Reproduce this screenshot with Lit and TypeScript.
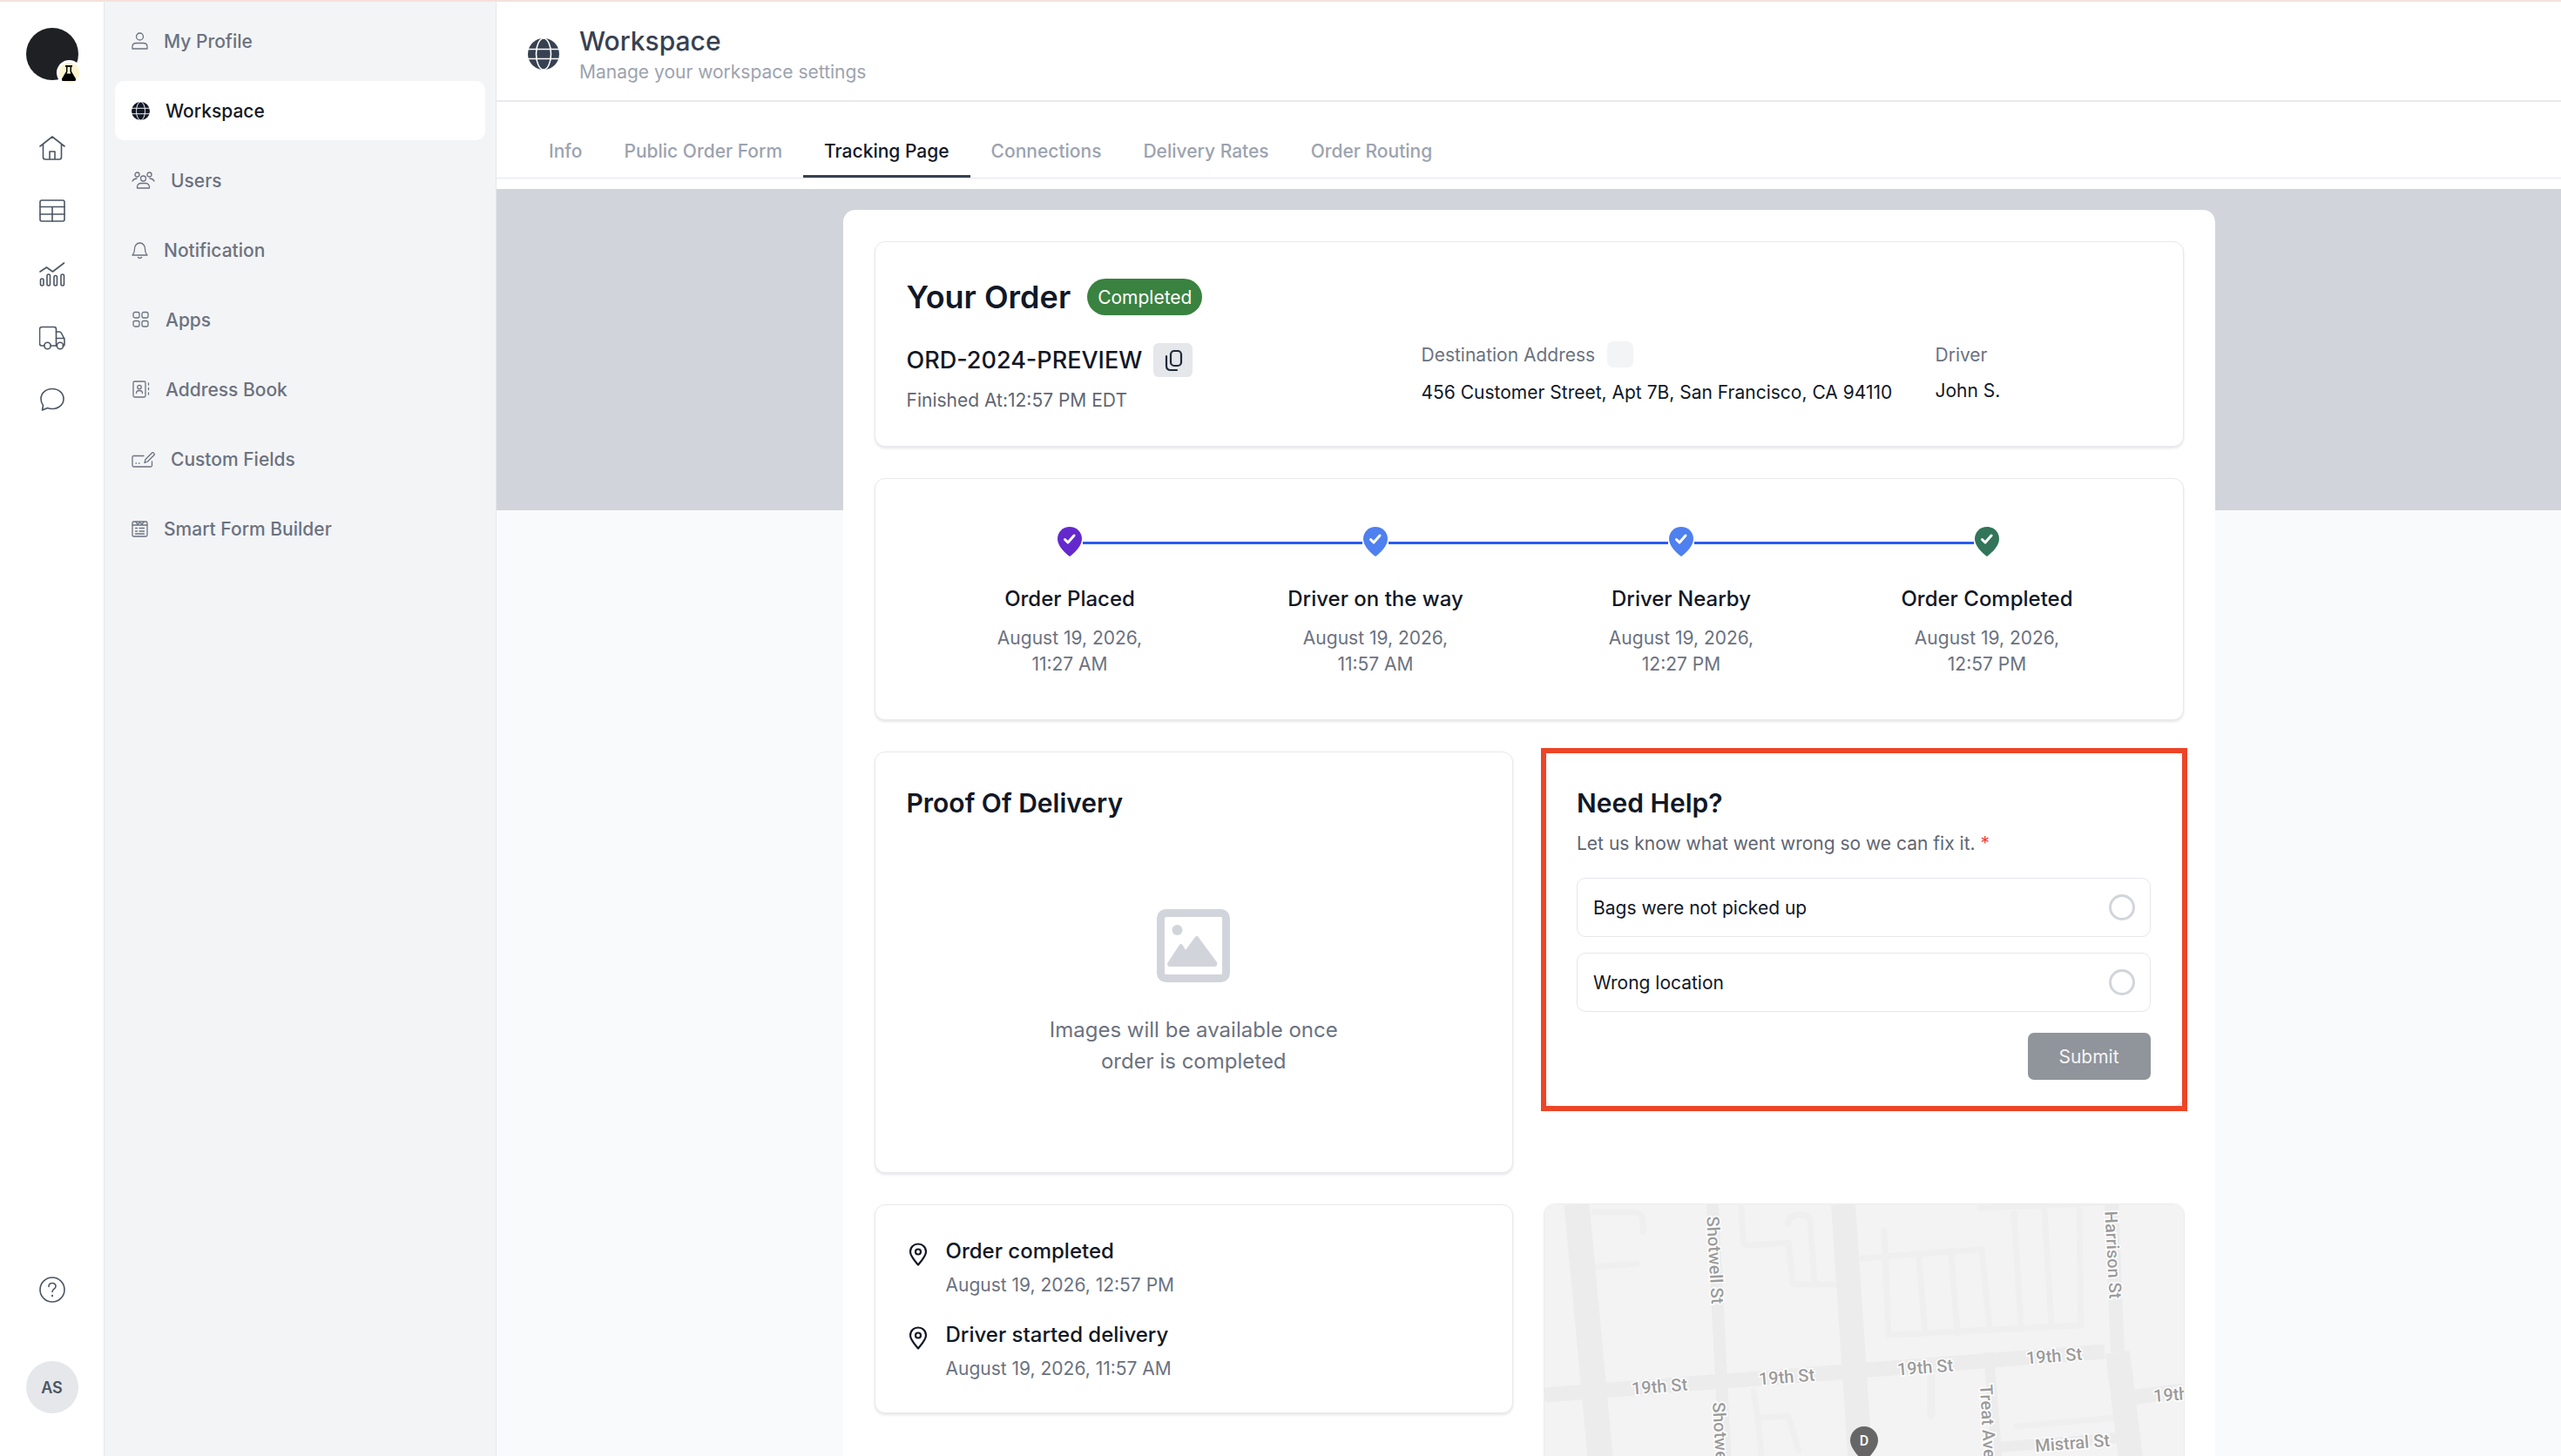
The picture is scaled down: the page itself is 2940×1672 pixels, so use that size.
import { LitElement, css, html, svg } from 'lit';
import { customElement } from 'lit/decorators.js';

const line = (w: number, h: number, body: unknown) => html`<svg
  class="line-icon"
  width=${w}
  height=${h}
  viewBox="0 0 ${w} ${h}"
  fill="none"
  stroke="currentColor"
  stroke-width="1.3"
  stroke-linecap="round"
  stroke-linejoin="round"
>${body}</svg>`;

const globe = (size: number) => html`<svg width=${size} height=${size} viewBox="0 0 36 36">
  <circle cx="18" cy="18" r="18" fill="currentColor"></circle>
  <g fill="none" stroke="#fff" stroke-width="1.6">
    <ellipse cx="18" cy="18" rx="8.5" ry="18"></ellipse>
    <path d="M0 12.5h36M0 23.5h36"></path>
  </g>
</svg>`;

const NAV = [
  {
    label: 'My Profile',
    icon: line(19, 20, svg`<circle cx="9.5" cy="5" r="4"/><path d="M1 19v-2.5C1 14 3 12.5 5.5 12.5h8c2.500 0 4.500 1.500 4.500 4V19z"/>`),
  },
  { label: 'Workspace', active: true, icon: globe(21) },
  {
    label: 'Users',
    icon: line(27, 20, svg`<circle cx="6.500" cy="3.500" r="2.500"/><circle cx="20.500" cy="3.500" r="2.500"/><circle cx="13.500" cy="8" r="3"/><path d="M1 11c1-2 3-3 5-3M26 11c-1-2-3-3-5-3M6.500 19v-1.500c0-2 2-4 4-4h6c2 0 4 2 4 4V19z"/>`),
  },
  {
    label: 'Notification',
    icon: line(19, 20, svg`<path d="M1 16c2-2 2.500-3 2.500-7 0-4 2.500-7 6-7s6 3 6 7c0 4 .5 5 2.500 7z"/><path d="M7.500 18.500c1 1.200 3 1.200 4 0"/>`),
  },
  {
    label: 'Apps',
    icon: line(21, 20, svg`<rect x="2" y="1.500" width="7" height="6.500" rx="2"/><rect x="12" y="1.500" width="7" height="6.500" rx="2"/><rect x="2" y="11.500" width="7" height="6.500" rx="2"/><rect x="12" y="11.500" width="7" height="6.500" rx="2"/>`),
  },
  {
    label: 'Address Book',
    icon: line(21, 20, svg`<rect x="2" y="1" width="14" height="18" rx="1.500"/><circle cx="9" cy="7.500" r="2.200"/><path d="M5.500 14.500c0-2 1.500-3 3.500-3s3.500 1 3.500 3M19.500 3v2M19.500 8.500v2M19.500 14v2"/>`),
  },
  {
    label: 'Custom Fields',
    icon: line(27, 20, svg`<path d="M14 6.500H2.500c-1 0-1.500.5-1.500 1.500v9.500c0 1 .5 1.500 1.500 1.500H22c1 0 1.500-.5 1.500-1.500V13"/><path d="M5 15h.5M8.500 15H9M15 14.500l1-4L23.500 3c1-1 3.500 1 2.500 2.500L18.500 13z"/>`),
  },
  {
    label: 'Smart Form Builder',
    icon: line(19, 20, svg`<rect x="1" y="2" width="17" height="17" rx="1.500"/><path d="M1 6h17M5 2.500l2 2.500 2.500-2 2.500 2 2-2.500M4.500 9.500h2M9 9.500h5.500M4.500 13h2M9 13h5.500M4.500 16h10"/>`),
  },
];

const RAIL = [
  svg`<path d="M1 13 15 2l14 11M4.500 11v14.500c0 1.500 1 2.500 2.500 2.500h16c1.500 0 2.500-1 2.500-2.500V11M12 28v-9h6v9"/>`,
  svg`<rect x="1" y="3" width="28" height="24" rx="2"/><path d="M1 10.500h28M1 19h28M15 10.500V27"/>`,
  svg`<path d="M1 12l7.500-5 7 5L28.500 2"/><rect x="1.500" y="20" width="3.500" height="8" rx="1.700"/><rect x="9" y="15" width="3.500" height="13" rx="1.700"/><rect x="17" y="16.500" width="3.500" height="11.500" rx="1.700"/><rect x="25" y="15" width="3.500" height="13" rx="1.700"/>`,
  svg`<path d="M6 25H3c-1.500 0-2.500-1-2.500-2.500V6C.5 4.500 1.500 3.500 3 3.500h14c1.500 0 2.500 1 2.500 2.500v19H13"/><path d="M19.500 9h3.500c1 0 2 .5 2.500 1.500l3 6c.3.700.5 1.300.5 2V24c0 .7-.5 1-1 1h-1M19.500 16.500h9.500M19.500 25h1"/><circle cx="9.500" cy="25" r="3.700"/><circle cx="24" cy="25" r="3.700"/>`,
  svg`<path d="M15 2.500c7.500 0 13 5 13 11.500s-5.500 11.500-13 11.500c-2 0-4-.5-5.500-1L3.500 27l1-5.500C3 19.500 2 17 2 14 2 7.500 7.500 2.500 15 2.500z"/>`,
];

const STEPS = [
  { title: 'Order Placed', day: 'August 19, 2026,', time: '11:27 AM', color: '#6429cd' },
  { title: 'Driver on the way', day: 'August 19, 2026,', time: '11:57 AM', color: '#4f80ef' },
  { title: 'Driver Nearby', day: 'August 19, 2026,', time: '12:27 PM', color: '#4f80ef' },
  { title: 'Order Completed', day: 'August 19, 2026,', time: '12:57 PM', color: '#32755a' },
];

const TABS = ['Info', 'Public Order Form', 'Tracking Page', 'Connections', 'Delivery Rates', 'Order Routing'];

const ACTIVITY = [
  { title: 'Order completed', date: 'August 19, 2026, 12:57 PM' },
  { title: 'Driver started delivery', date: 'August 19, 2026, 11:57 AM' },
];

const pin = (color: string) => html`<svg class="pin" width="28" height="34" viewBox="0 0 28 34">
  <path fill=${color} d="M14 0C6 0 0 6 0 14c0 8 9 16.500 14 20 5-3.500 14-12 14-20C28 6 22 0 14 0z"></path>
  <path fill="none" stroke="#fff" stroke-width="3" stroke-linecap="round" stroke-linejoin="round" d="M8.500 14.500l3.500 3.500 7-8"></path>
</svg>`;

const mapView = html`<svg class="map-svg" width="734" height="300" viewBox="0 0 734 300">
  <rect width="734" height="300" fill="#f3f3f3"></rect>
  <g fill="none" stroke="#efefef" stroke-width="7" stroke-linecap="round" stroke-linejoin="round">
    <path d="M57 9h45c8 0 11 4 11 12v10M59 72l47-4"></path>
    <path d="M226 4l2 36c0 5 3 7 8 7l44-3 5 46c0 2 2 2 5 2h45M305 20c0-5-4-8-12-8-8 0-13 3-13 10M305 20l5 67"></path>
    <path d="M365 62l132-10M500 4l144-6M390 30l5 120 221-11"></path>
    <path d="M430 62l7 86M467 60l7 88M502 52l9 90M539 10l8 130M574 8l8 130M614 6l2 133"></path>
    <path d="M240 214l5 31 35-2 12 40M245 245l5 55M542 255l114-10"></path>
    <path d="M444 197v45" stroke-width="9"></path>
  </g>
  <g fill="none" stroke="#ececec" stroke-linecap="butt">
    <path d="M37 0l28 300" stroke-width="29"></path>
    <path d="M343 0l20 300" stroke-width="28"></path>
    <path d="M193 0l15 300" stroke-width="14"></path>
    <path d="M651 0l7 170" stroke-width="16"></path>
    <path d="M658 170l16 130" stroke-width="28"></path>
    <path d="M510 170l10 130" stroke-width="12"></path>
    <path d="M0 219l643-50" stroke-width="17"></path>
    <path d="M672 222l62-8" stroke-width="17"></path>
    <path d="M520 279l140-11" stroke-width="12"></path>
  </g>
  <g class="map-label">
    <text x="132" y="209" text-anchor="middle" transform="rotate(-4.500 132 209)" dy="7">19th St</text>
    <text x="278" y="198" text-anchor="middle" transform="rotate(-4.500 278 198)" dy="7">19th St</text>
    <text x="437" y="187" text-anchor="middle" transform="rotate(-4.500 437 187)" dy="7">19th St</text>
    <text x="585" y="174" text-anchor="middle" transform="rotate(-4.500 585 174)" dy="7">19th St</text>
    <text x="699" y="220" transform="rotate(-4.500 699 220)" dy="7">19th St</text>
    <text x="196" y="64" text-anchor="middle" transform="rotate(86.800 196 64)" dy="7">Shotwell St</text>
    <text x="653" y="58" text-anchor="middle" transform="rotate(87 653 58)" dy="7">Harrison St</text>
    <text x="200" y="227" transform="rotate(86.800 200 227)" dy="7">Shotwell St</text>
    <text x="507" y="207" transform="rotate(87 507 207)" dy="7">Treat Ave</text>
    <text x="606" y="274" text-anchor="middle" transform="rotate(-4.500 606 274)" dy="7">Mistral St</text>
  </g>
  <path fill="#666666" d="M367 255c-9 0-16 7-16 16 0 9 10 19 16 25 6-6 16-16 16-25 0-9-7-16-16-16z"></path>
  <path fill="#2f8f5b" d="M364 298h6l-3 2z"></path>
  <text x="367" y="277" text-anchor="middle" class="map-pin-label">D</text>
</svg>`;

@customElement('app-root')
export class AppRoot extends LitElement {
  static styles = css`
    :host {
      display: block;
      width: 2940px;
      height: 1672px;
      overflow: hidden;
      box-sizing: border-box;
      border-top: 2px solid #f5e1dc;
      background: #fff;
      color: #111827;
      font-family: Inter, 'Liberation Sans', sans-serif;
    }

    * {
      box-sizing: border-box;
    }

    .shell {
      display: flex;
      height: 1670px;
    }

    .rail {
      width: 120px;
      flex: none;
      border-right: 1px solid #e5e7eb;
      display: flex;
      flex-direction: column;
      align-items: center;
      padding: 30px 0 49px;
      color: #4b5563;
    }

    .logo {
      position: relative;
      width: 60px;
      height: 60px;
      border-radius: 50%;
      background: #1f2023;
      margin-bottom: 63px;
    }

    .logo-badge {
      position: absolute;
      right: -3px;
      bottom: -5px;
      width: 27px;
      height: 27px;
      border: 2px solid #fff;
      border-radius: 50%;
      background: #fdf3cd;
      display: grid;
      place-items: center;
      box-shadow: 0 0 0 1px #fff;
    }

    .rail-icons {
      display: flex;
      flex-direction: column;
      gap: 42.3px;
    }

    .rail-icons svg {
      display: block;
    }

    .rail-bottom {
      margin-top: auto;
      display: flex;
      flex-direction: column;
      align-items: center;
      gap: 67px;
    }

    .help-icon {
      display: block;
    }

    .avatar {
      width: 60px;
      height: 60px;
      border-radius: 50%;
      background: #e5e7eb;
      color: #4b5563;
      display: grid;
      place-items: center;
      font-size: 18px;
      font-weight: 600;
    }

    .side {
      width: 450px;
      flex: none;
      background: #f3f4f6;
      border-right: 1px solid #e5e7eb;
      padding: 11px 12px 0;
      display: flex;
      flex-direction: column;
      gap: 12px;
    }

    .nav-item {
      height: 68px;
      padding-left: 19px;
      border-radius: 10px;
      display: flex;
      align-items: center;
      gap: 18px;
      font-size: 21px;
      font-weight: 500;
      color: #6b7280;
    }

    .nav-item.active {
      background: #fff;
      color: #111827;
    }

    .nav-item svg {
      flex: none;
      display: block;
    }

    .main {
      flex: 1;
      min-width: 0;
      display: flex;
      flex-direction: column;
    }

    .page-head {
      height: 115px;
      flex: none;
      border-bottom: 2px solid #e9eaee;
      padding: 25px 0 18px 36px;
      display: flex;
      align-items: center;
      gap: 23px;
      color: #374151;
    }

    .page-head svg {
      display: block;
    }

    .page-title {
      font-size: 30px;
      line-height: 40px;
      font-weight: 500;
    }

    .page-sub {
      margin-top: 1px;
      font-size: 21px;
      line-height: 30px;
      color: #9ca3af;
    }

    .tabs {
      height: 88px;
      flex: none;
      display: flex;
      padding-left: 36px;
      border-bottom: 1px solid #e5e7eb;
      margin-bottom: 12px;
    }

    .tab {
      height: 87px;
      padding: 40px 24px 0;
      font-size: 21px;
      line-height: 34px;
      font-weight: 500;
      color: #9ca3af;
    }

    .tab.active {
      color: #111827;
      border-bottom: 3px solid #374151;
    }

    .stage {
      flex: 1;
      min-height: 0;
      overflow: hidden;
      display: flex;
      justify-content: center;
      padding-top: 24px;
      background: linear-gradient(#d1d5db 369px, #f9fafb 369px);
    }

    .sheet {
      width: 1575px;
      height: 1600px;
      flex: none;
      background: #fff;
      border-radius: 14px 14px 0 0;
      padding: 36px;
      display: flex;
      flex-direction: column;
      gap: 36px;
    }

    .card {
      background: #fff;
      border: 1px solid #e8e9ec;
      border-radius: 12px;
      box-shadow: 0 2px 3px rgba(17, 24, 39, 0.1);
    }

    .order {
      height: 236px;
      padding: 42px 36px 0;
    }

    .order-head {
      display: flex;
      align-items: center;
      gap: 19px;
      height: 42px;
      margin-bottom: 30px;
    }

    .order-title {
      font-size: 36px;
      font-weight: 600;
    }

    .badge {
      height: 42px;
      padding: 0 12px;
      border-radius: 21px;
      background: #3a8240;
      color: #fff;
      font-size: 21px;
      display: flex;
      align-items: center;
    }

    .order-grid {
      display: grid;
      grid-template-columns: 591px 590px 1fr;
    }

    .order-id {
      display: flex;
      align-items: center;
      gap: 13px;
      height: 39px;
      margin-top: 2px;
      font-size: 27px;
      font-weight: 500;
    }

    .copy {
      width: 45px;
      height: 39px;
      border-radius: 6px;
      background: #e5e7eb;
      display: grid;
      place-items: center;
      color: #1f2937;
    }

    .finished {
      margin-top: 12px;
      font-size: 21px;
      line-height: 30px;
      color: #5f6673;
    }

    .field-label {
      display: flex;
      align-items: center;
      gap: 14px;
      height: 30px;
      font-size: 21px;
      color: #6b7280;
    }

    .blank-chip {
      width: 30px;
      height: 30px;
      border-radius: 7px;
      background: #f3f4f6;
    }

    .field-value {
      margin-top: 14px;
      font-size: 21px;
      line-height: 30px;
    }

    .field-value.driver {
      margin-top: 12px;
    }

    .timeline {
      height: 278px;
      padding: 55px 46px 0 48px;
      display: grid;
      grid-template-columns: repeat(4, 351px);
    }

    .step {
      text-align: center;
    }

    .track {
      display: flex;
      align-items: center;
      gap: 1px;
      height: 34px;
    }

    .track-line {
      flex: 1;
      height: 3px;
      margin-top: 2px;
      background: #2b5cf0;
    }

    .track-line.off {
      background: transparent;
    }

    .pin {
      flex: none;
      display: block;
    }

    .step-title {
      margin-top: 31px;
      font-size: 24px;
      line-height: 36px;
      font-weight: 500;
    }

    .step-date {
      margin-top: 12px;
      font-size: 21px;
      line-height: 29.5px;
      color: #6b7280;
    }

    .columns {
      display: grid;
      grid-template-columns: 1fr 1fr;
      gap: 36px;
      align-items: start;
    }

    .heading {
      font-size: 30px;
      line-height: 40px;
      font-weight: 600;
    }

    .proof {
      height: 484px;
      padding: 38px 36px 0;
    }

    .proof-empty {
      margin-top: 102px;
      display: flex;
      flex-direction: column;
      align-items: center;
      text-align: center;
      font-size: 24px;
      line-height: 36px;
      color: #6b7280;
    }

    .proof-empty svg {
      display: block;
      margin-bottom: 37px;
    }

    .help {
      position: relative;
      height: 408px;
      padding: 38px 37px 0 36px;
    }

    .help::after {
      content: '';
      position: absolute;
      inset: -5px -5px -6px -5px;
      border: 6px solid #ec4527;
      pointer-events: none;
    }

    .help-sub {
      margin-top: 12px;
      font-size: 21px;
      line-height: 30px;
      color: #5f6673;
    }

    .required {
      color: #ef4444;
    }

    .options {
      margin-top: 24px;
      display: flex;
      flex-direction: column;
      gap: 18px;
    }

    .option {
      height: 68px;
      border: 1px solid #e5e7eb;
      border-radius: 10px;
      padding: 0 17px 0 18px;
      display: flex;
      align-items: center;
      justify-content: space-between;
      font-size: 21px;
    }

    .radio {
      width: 30px;
      height: 30px;
      border: 3px solid #d1d5db;
      border-radius: 50%;
    }

    .help-actions {
      margin-top: 24px;
      display: flex;
      justify-content: flex-end;
    }

    .submit {
      width: 141px;
      height: 54px;
      border-radius: 7px;
      background: #90949b;
      color: #f3f4f6;
      display: grid;
      place-items: center;
      font-size: 21px;
    }

    .activity {
      height: 240px;
      padding: 36px 38px 0;
      display: flex;
      flex-direction: column;
      gap: 25px;
    }

    .event {
      display: flex;
      gap: 21px;
    }

    .event svg {
      flex: none;
      display: block;
      margin-top: 7px;
    }

    .event-title {
      font-size: 24px;
      line-height: 34px;
      font-weight: 500;
    }

    .event-date {
      margin-top: 7px;
      font-size: 21px;
      line-height: 30px;
      color: #6b7280;
    }

    .map {
      height: 300px;
      overflow: hidden;
      border-radius: 12px;
      box-shadow: 0 0 0 1px #ececee;
    }

    .map-svg {
      display: block;
    }

    .map-label text {
      font: 500 20px Roboto, sans-serif;
      fill: #9b9b9b;
      stroke: #fff;
      stroke-width: 3px;
      paint-order: stroke;
    }

    .map-pin-label {
      font: 500 16px Roboto, sans-serif;
      fill: #fff;
    }
  `;

  render() {
    return html`
      <div class="shell">
        <nav class="rail">
          <div class="logo">
            <span class="logo-badge">
              <svg width="16" height="18" viewBox="0 0 16 18">
                <path fill="#000" d="M4 0h8v2h-1v5l5 8.500c.6 1.200-.1 2.500-1.500 2.500h-13C.100 18-.6 16.700 0 15.500L5 7V2H4z"></path>
                <path fill="#fdf3cd" d="M6.500 2h3v5.500l1 2h-5l1-2z"></path>
              </svg>
            </span>
          </div>
          <div class="rail-icons">
            ${RAIL.map(
              (body) => html`<svg
                width="30"
                height="30"
                viewBox="0 0 30 30"
                fill="none"
                stroke="currentColor"
                stroke-width="1.6"
                stroke-linecap="round"
                stroke-linejoin="round"
              >${body}</svg>`,
            )}
          </div>
          <div class="rail-bottom">
            <svg class="help-icon" width="30" height="30" viewBox="0 0 30 30" fill="none" stroke="currentColor" stroke-width="1.6" stroke-linecap="round">
              <circle cx="15" cy="15" r="14"></circle>
              <path d="M11 11.500c0-2.500 1.800-4 4-4s4 1.500 4 3.700c0 3-4 3-4 6.300"></path>
              <path d="M15 21.800v.4" stroke-width="2"></path>
            </svg>
            <div class="avatar">AS</div>
          </div>
        </nav>

        <aside class="side">
          ${NAV.map(
            (item) => html`<div class="nav-item ${item.active ? 'active' : ''}">${item.icon}<span>${item.label}</span></div>`,
          )}
        </aside>

        <main class="main">
          <header class="page-head">
            ${globe(36)}
            <div>
              <div class="page-title">Workspace</div>
              <div class="page-sub">Manage your workspace settings</div>
            </div>
          </header>

          <div class="tabs">
            ${TABS.map((tab) => html`<div class="tab ${tab === 'Tracking Page' ? 'active' : ''}">${tab}</div>`)}
          </div>

          <div class="stage">
            <div class="sheet">
              <section class="card order">
                <div class="order-head">
                  <span class="order-title">Your Order</span>
                  <span class="badge">Completed</span>
                </div>
                <div class="order-grid">
                  <div>
                    <div class="order-id">
                      <span>ORD-2024-PREVIEW</span>
                      <span class="copy">
                        <svg width="22" height="26" viewBox="0 0 22 26" fill="none" stroke="currentColor" stroke-width="2.200" stroke-linecap="round" stroke-linejoin="round">
                          <rect x="8" y="2" width="12" height="17" rx="4"></rect>
                          <path d="M3 8v11c0 3 2 5 5 5h7"></path>
                        </svg>
                      </span>
                    </div>
                    <div class="finished">Finished At:12:57 PM EDT</div>
                  </div>
                  <div>
                    <div class="field-label">Destination Address <span class="blank-chip"></span></div>
                    <div class="field-value">456 Customer Street, Apt 7B, San Francisco, CA 94110</div>
                  </div>
                  <div>
                    <div class="field-label">Driver</div>
                    <div class="field-value driver">John S.</div>
                  </div>
                </div>
              </section>

              <section class="card timeline">
                ${STEPS.map(
                  (step, i) => html`<div class="step">
                    <div class="track">
                      <span class="track-line ${i === 0 ? 'off' : ''}"></span>
                      ${pin(step.color)}
                      <span class="track-line ${i === STEPS.length - 1 ? 'off' : ''}"></span>
                    </div>
                    <div class="step-title">${step.title}</div>
                    <div class="step-date">${step.day}<br />${step.time}</div>
                  </div>`,
                )}
              </section>

              <div class="columns">
                <section class="card proof">
                  <div class="heading">Proof Of Delivery</div>
                  <div class="proof-empty">
                    <svg width="84" height="84" viewBox="0 0 84 84">
                      <rect x="4.500" y="4.500" width="75" height="75" rx="6" fill="none" stroke="#d1d5db" stroke-width="9"></rect>
                      <circle cx="23.500" cy="24" r="6" fill="#d1d5db"></circle>
                      <path fill="#d1d5db" d="M15 66c-2.500 0-3.500-2-2.500-4.500L26 41c1-1.500 2.500-1.500 3.500 0l3.500 6 11-15c1-1.500 3-1.500 4 .5L69 61c1 2.500 0 5-2.500 5z"></path>
                    </svg>
                    <div>Images will be available once<br />order is completed</div>
                  </div>
                </section>

                <section class="card help">
                  <div class="heading">Need Help?</div>
                  <div class="help-sub">Let us know what went wrong so we can fix it. <span class="required">*</span></div>
                  <div class="options">
                    <div class="option"><span>Bags were not picked up</span><span class="radio"></span></div>
                    <div class="option"><span>Wrong location</span><span class="radio"></span></div>
                  </div>
                  <div class="help-actions"><div class="submit">Submit</div></div>
                </section>
              </div>

              <div class="columns">
                <section class="card activity">
                  ${ACTIVITY.map(
                    (event) => html`<div class="event">
                      <svg width="22" height="27" viewBox="0 0 22 27" fill="none" stroke="#111827" stroke-width="2.200" stroke-linejoin="round">
                        <path d="M11 25.500C7 20.500 2 15.500 2 10.500 2 5 6 1.500 11 1.500s9 3.500 9 9c0 5-5 10-9 15z"></path>
                        <circle cx="11" cy="10.500" r="3"></circle>
                      </svg>
                      <div>
                        <div class="event-title">${event.title}</div>
                        <div class="event-date">${event.date}</div>
                      </div>
                    </div>`,
                  )}
                </section>
                <section class="map">${mapView}</section>
              </div>
            </div>
          </div>
        </main>
      </div>
    `;
  }
}

declare global {
  interface HTMLElementTagNameMap {
    'app-root': AppRoot;
  }
}
